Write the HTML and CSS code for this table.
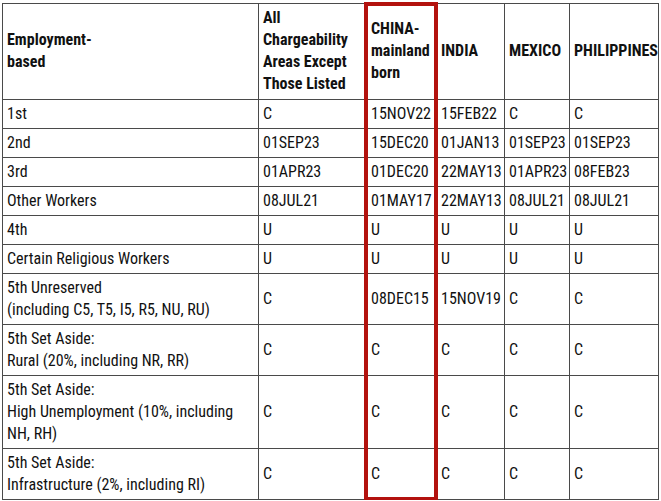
FILE: index.html
```html
<!DOCTYPE html>
<html>
<head>
<meta charset="utf-8">
<link rel="stylesheet" href="styles.css">
</head>
<body>
<div class="wrap">
<table class="bulletin">
<colgroup>
<col class="c1"><col class="c2"><col class="c3"><col class="c4"><col class="c5"><col class="c6">
</colgroup>
<thead>
<tr>
<th>Employment-<br>based</th>
<th>All<br>Chargeability<br>Areas Except<br>Those Listed</th>
<th>CHINA-<br>mainland<br>born</th>
<th>INDIA</th>
<th>MEXICO</th>
<th>PHILIPPINES</th>
</tr>
</thead>
<tbody>
<tr><td>1st</td><td>C</td><td>15NOV22</td><td>15FEB22</td><td>C</td><td>C</td></tr>
<tr><td>2nd</td><td>01SEP23</td><td>15DEC20</td><td>01JAN13</td><td>01SEP23</td><td>01SEP23</td></tr>
<tr><td>3rd</td><td>01APR23</td><td>01DEC20</td><td>22MAY13</td><td>01APR23</td><td>08FEB23</td></tr>
<tr><td>Other Workers</td><td>08JUL21</td><td>01MAY17</td><td>22MAY13</td><td>08JUL21</td><td>08JUL21</td></tr>
<tr><td>4th</td><td>U</td><td>U</td><td>U</td><td>U</td><td>U</td></tr>
<tr><td>Certain Religious Workers</td><td>U</td><td>U</td><td>U</td><td>U</td><td>U</td></tr>
<tr><td>5th Unreserved<br>(including C5, T5, I5, R5, NU, RU)</td><td>C</td><td>08DEC15</td><td>15NOV19</td><td>C</td><td>C</td></tr>
<tr><td>5th Set Aside:<br>Rural (20%, including NR, RR)</td><td>C</td><td>C</td><td>C</td><td>C</td><td>C</td></tr>
<tr><td>5th Set Aside:<br>High Unemployment (10%, including<br>NH, RH)</td><td>C</td><td>C</td><td>C</td><td>C</td><td>C</td></tr>
<tr><td>5th Set Aside:<br>Infrastructure (2%, including RI)</td><td>C</td><td>C</td><td>C</td><td>C</td><td>C</td></tr>
</tbody>
</table>
<div class="highlight"></div>
</div>
</body>
</html>
```

FILE: styles.css
```css
html, body {
  margin: 0;
  padding: 0;
  background: #ffffff;
}
body {
  font-family: "Roboto Condensed", "Liberation Sans Narrow", "Roboto", sans-serif;
  font-size: 16px;
  line-height: 22px;
  color: #111111;
}
.wrap {
  position: relative;
  padding: 3px 0 0 2px;
}
.bulletin {
  border-collapse: collapse;
  table-layout: fixed;
  width: 656px;
}
.c1 { width: 256px; }
.c2 { width: 108px; }
.c3 { width: 70px; }
.c4 { width: 68px; }
.c5 { width: 65px; }
.c6 { width: 89px; }
.bulletin th,
.bulletin td {
  border: 1px solid #4a4a4a;
  padding: 3px 2px 3px 4px;
  text-align: left;
  vertical-align: middle;
  white-space: nowrap;
}
.bulletin th {
  font-weight: 700;
  padding-bottom: 4px;
}
.highlight {
  position: absolute;
  left: 364px;
  top: 2px;
  width: 66px;
  height: 491px;
  border: 4px solid #b3120e;
  pointer-events: none;
}
```
